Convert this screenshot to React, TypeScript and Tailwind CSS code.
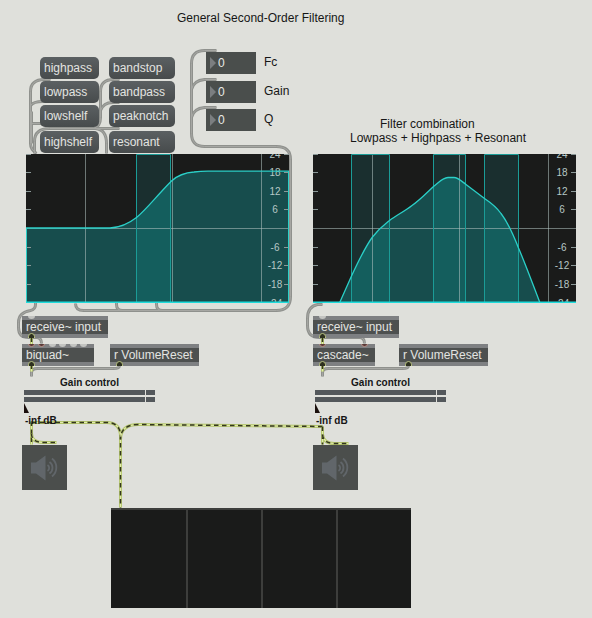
import { useId } from "react";

type Placed = { place: string };

/* ---------- patch cords ---------- */

const controlCords = [
  // message boxes into the first graph
  "M51 80 H45 Q31 80 31 92 V144 Q31 150 37 154",
  "M51 102 H43 Q34 102 31 106",
  "M51 124 H32 M32 112 V144",
  "M120 129 H50 Q35 129 35 142 V154",
  "M90 129 H96 Q107 130 107 144 V154",
  "M120 80 H114 Q101 80 101 92 V118 Q101 127 94 129",
  "M120 103 H113 Q104 103 101 111",
  // number boxes
  "M217 51 H205 Q192 51 192 64 V134 Q192 147 205 147 H277 Q291 147 291 160 V297 Q291 311 277 311 H84 Q76 311 76 304",
  "M217 80 H205 Q194 81 192 90",
  "M217 108 H205 Q194 109 192 118",
  // graph outlets
  "M117 303 V305 Q117 311 123 311",
  "M157 303 V305 Q157 311 163 311",
  "M36 303 V305 Q36 310 31 311 Q19 313 19 323 V328 Q19 338 29 338 H37 Q42 338 42 344",
  "M323 305 H318 Q308 307 308 319 V326 Q308 338 320 338 H360 Q365 338 365 344",
  // volume resets
  "M120 366 Q120 369 114 369 H38 Q32 369 32 373 V377",
  "M409 366 Q409 369 403 369 H329 Q323 369 323 373 V377",
];

const signalCords = [
  "M32 338 V345",
  "M323 338 V345",
  "M32 365 V372",
  "M323 365 V372",
  "M32 422 V445",
  "M32 434 Q32 443 44 443 H57",
  "M32 423 H107 Q121 423 121 437 V508",
  "M323 427 L139 425 Q121 425 121 440",
  "M323 427 V445",
  "M323 435 Q324 444 335 444 H349",
];

function Cords() {
  return (
    <svg className="pointer-events-none absolute inset-0 h-full w-full overflow-visible" fill="none" aria-hidden="true">
      <g transform="translate(-0.5 -0.5)">
        {controlCords.map((d) => (
          <path key={d} d={d} stroke="#8f918d" strokeWidth="3" />
        ))}
        {controlCords.map((d) => (
          <path key={d} d={d} stroke="#a6a7a3" strokeWidth="1" />
        ))}
        {signalCords.map((d) => (
          <path key={d} d={d} stroke="#b3c46c" strokeWidth="3" />
        ))}
        {signalCords.map((d) => (
          <g key={d}>
            <path d={d} stroke="#e2edaa" strokeWidth="1.2" />
            <path d={d} stroke="#34371f" strokeWidth="1.5" strokeDasharray="4.5 3.5" />
          </g>
        ))}
      </g>
    </svg>
  );
}

/* Half-round inlets and ringed outlets drawn over the object boxes. */
function Ports() {
  return (
    <svg className="pointer-events-none absolute inset-0 h-full w-full overflow-visible" fill="none" aria-hidden="true">
      <g transform="translate(-0.5 0)">
        {[[32, 316], [323, 316], [53, 344], [63, 344], [74, 344], [84, 344]].map(([x, y]) => (
          <path key={`${x}-${y}`} d={`M${x - 3.5} ${y} a3.5 3 0 0 0 7 0 z`} fill="#c3c4c1" />
        ))}
        {[[32, 344], [42, 344], [323, 344], [365, 344]].map(([x, y]) => (
          <path key={x} d={`M${x - 3} ${y} a3 2.500 0 0 0 6 0`} fill="#5a3a37" stroke="#b9938a" />
        ))}
        {[[32, 336], [32, 364], [120, 364], [323, 336], [323, 364], [409, 364]].map(([x, y]) => (
          <path key={`${x}-${y}`} d={`M${x - 3} ${y + 2} v-1.500 a3 3 0 0 1 6 0 v1.500`} fill="#2d3020" stroke="#b9c382" />
        ))}
      </g>
    </svg>
  );
}

/* ---------- filter graph ---------- */

const dbMarks = [
  [24, 0], [18, 18], [12, 37], [6, 55], [-6, 93], [-12, 111], [-18, 130], [-24, 149],
];

type GraphProps = Placed & {
  name: string;
  curve: string;
  area: string;
  bands: number[][];
  closed?: boolean;
};

function FilterGraph({ place, name, curve, area, bands, closed }: GraphProps) {
  const clip = useId();
  return (
    <svg className={`absolute h-[149px] w-[263px] ${place}`} viewBox="0 0 263 149" role="img" aria-label={name}>
      <defs>
        <clipPath id={clip}>
          <path d={area} />
        </clipPath>
      </defs>
      <rect width="263" height="149" fill="#1a1b1a" />
      {bands.map(([a, b]) => (
        <rect key={a} x={a} y="0" width={b - a} height="149" fill="#1a2f2f" />
      ))}
      <path d={area} fill="#174d4d" />
      <g clipPath={`url(#${clip})`}>
        {bands.map(([a, b]) => (
          <rect key={a} x={a} y="0" width={b - a} height="149" fill="#145e5d" />
        ))}
      </g>
      <path d="M0 74.5 H263 M59.5 0 V149 M146.5 0 V149 M235.5 0 V149" stroke="#b4c4c2" strokeOpacity="0.55" fill="none" />
      {bands.map(([a, b]) => (
        <path key={a} d={`M${a + 0.5} 149 V0.5 H${b + 0.5} V149`} fill="none" stroke="#1b9c97" />
      ))}
      {dbMarks.map(([db, y]) => (
        <g key={db}>
          <path d={`M0 ${y + 0.5} h5 M258 ${y + 0.5} h5`} stroke="#8b9998" />
          <text
            x="249"
            y={y + 4}
            textAnchor="middle"
            className="fill-[#b6c8c6] text-[10px] [font-family:'Liberation_Sans',Arial,sans-serif]"
          >
            {db}
          </text>
        </g>
      ))}
      <path d={curve} fill="none" stroke="#2bd0c8" strokeWidth="1.3" />
      {closed && <path d="M0.5 74 V148.5 M262.5 17 V148.5" stroke="#2bd0c8" fill="none" />}
      <path d="M0 148.3 H263" stroke="#1fdcdc" strokeWidth="1.6" />
    </svg>
  );
}

const shelfCurve =
  "M0 74 H84 C93 73.5 101 71 110.5 63.5 C120 56 130 42.5 145.5 27 C153 20 160 18.5 168 18 C172 17.5 176 17.2 182 17.2 H263";
const comboCurve =
  "M26.5 149 L38.5 122 C45 108 52 93 59.5 83 C66 74 71 71 76.5 66.5 C84 61 92 57 99 51.5 C107 46 113 39.5 120.5 32.5 C126 28 130 23.5 135 23.5 H141 C145 23.5 149 27.5 153 30.5 L171.5 44.5 C177.5 48.5 183.5 53 188 59.5 C194.5 68 200.5 81 205.5 94 C212 109 219 128 227 149";

/* ---------- boxes ---------- */

function Message({ place, text }: Placed & { text: string }) {
  return (
    <button
      type="button"
      className={`absolute h-[22px] rounded-[5px] bg-linear-to-b from-[#5b6062] to-[#474b4c] px-1 text-left text-xs text-[#e3e4e1] ${place}`}
    >
      {text}
    </button>
  );
}

function NumberBox({ place, label }: Placed & { label: string }) {
  const id = useId();
  return (
    <div className={`absolute flex items-center gap-2 ${place}`}>
      <div className="flex h-[22px] w-[50px] items-center gap-0.5 bg-[#4a4e4c] pl-1">
        <span className="h-0 w-0 border-y-6 border-l-6 border-y-transparent border-l-[#7b7e80]" />
        <input id={id} defaultValue="0" inputMode="numeric" className="w-8 min-w-0 bg-transparent text-xs text-[#e8e9e6] outline-none" />
      </div>
      <label htmlFor={id} className="pb-0.5">{label}</label>
    </div>
  );
}

function ObjectBox({ place, text }: Placed & { text: string }) {
  return (
    <div className={`absolute flex h-[22px] items-center border-y-4 border-[#7e8082] bg-[#4d504f] px-1 text-xs text-[#e3e4e1] ${place}`}>
      {text}
    </div>
  );
}

function GainControl({ place }: Placed) {
  const id = useId();
  return (
    <div className={`absolute flex w-[131px] flex-col text-[10px] leading-[14px] font-bold ${place}`}>
      <label htmlFor={id} className="text-center">Gain control</label>
      <input
        id={id}
        type="range"
        defaultValue={0}
        className="h-[23px] w-full appearance-none bg-[linear-gradient(90deg,transparent_121px,#dfe0db_121px,#dfe0db_122px,transparent_122px),linear-gradient(#53585b_5px,transparent_5px,transparent_7px,#53585b_7px)] bg-[length:100%_12px] bg-no-repeat [&::-webkit-slider-runnable-track]:h-full [&::-webkit-slider-thumb]:mt-[13px] [&::-webkit-slider-thumb]:h-[10px] [&::-webkit-slider-thumb]:w-[5px] [&::-webkit-slider-thumb]:appearance-none [&::-webkit-slider-thumb]:bg-[#1a0f0c] [&::-webkit-slider-thumb]:[clip-path:polygon(0_0,100%_100%,0_100%)]"
      />
      <output htmlFor={id} className="pt-px pl-px">-inf dB</output>
    </div>
  );
}

function AudioToggle({ place }: Placed) {
  return (
    <button type="button" aria-label="Audio output" className={`absolute size-[45px] bg-[#4b4e4c] ${place}`}>
      <svg viewBox="0 0 45 45" fill="none" aria-hidden="true">
        <path d="M9 17.5 H14 L23.500 10.500 V35.500 L14 28.500 H9 Z" fill="#61666a" />
        <path d="M25.500 20 a3.500 3.500 0 0 1 0 6 M27.500 17 a7 7 0 0 1 0 11.500 M30 13.500 a11.500 11.500 0 0 1 0 18" stroke="#61666a" strokeWidth="1.8" />
      </svg>
    </button>
  );
}

export default function App() {
  return (
    <main className="relative min-h-screen w-full overflow-hidden bg-[#dfe0db] text-xs leading-[14px] text-[#161616] [font-family:'Liberation_Sans',Arial,sans-serif]">
      <h1 className="absolute top-[11px] left-[177px]">General Second-Order Filtering</h1>
      <h2 className="absolute top-[117px] left-[350px]">
        <span className="block pl-[30px]">Filter combination</span>
        <span className="block">Lowpass + Highpass + Resonant</span>
      </h2>

      <Cords />

      <Message place="top-[57px] left-[40px] w-[59px]" text="highpass" />
      <Message place="top-[81px] left-[40px] w-[59px]" text="lowpass" />
      <Message place="top-[105px] left-[40px] w-[59px]" text="lowshelf" />
      <Message place="top-[131px] left-[40px] w-[59px]" text="highshelf" />
      <Message place="top-[57px] left-[109px] w-[66px]" text="bandstop" />
      <Message place="top-[81px] left-[109px] w-[66px]" text="bandpass" />
      <Message place="top-[105px] left-[109px] w-[66px]" text="peaknotch" />
      <Message place="top-[131px] left-[109px] w-[66px]" text="resonant" />

      <NumberBox place="top-[52px] left-[206px]" label="Fc" />
      <NumberBox place="top-[81px] left-[206px]" label="Gain" />
      <NumberBox place="top-[109px] left-[206px]" label="Q" />

      <FilterGraph
        place="top-[154px] left-[26px]"
        name="Second-order filter response"
        curve={shelfCurve}
        area={`${shelfCurve} V149 H0 Z`}
        bands={[[110, 144]]}
        closed
      />
      <FilterGraph
        place="top-[154px] left-[313px]"
        name="Combined filter response"
        curve={comboCurve}
        area={`${comboCurve} Z`}
        bands={[[38, 76], [120, 152], [171, 205]]}
      />

      <ObjectBox place="top-[316px] left-[22px] w-[86px]" text="receive~ input" />
      <ObjectBox place="top-[344px] left-[22px] w-[72px]" text="biquad~" />
      <ObjectBox place="top-[344px] left-[110px] w-[89px]" text="r VolumeReset" />
      <ObjectBox place="top-[316px] left-[313px] w-[86px]" text="receive~ input" />
      <ObjectBox place="top-[344px] left-[313px] w-[62px]" text="cascade~" />
      <ObjectBox place="top-[344px] left-[399px] w-[89px]" text="r VolumeReset" />
      <Ports />

      <GainControl place="top-[376px] left-[24px]" />
      <GainControl place="top-[376px] left-[315px]" />
      <AudioToggle place="top-[445px] left-[22px]" />
      <AudioToggle place="top-[445px] left-[313px]" />

      <div className="absolute top-[508px] left-[111px] grid h-[100px] w-[300px] grid-cols-4 border-t-2 border-[#3d3e3c] bg-[#1a1b1a]">
        <div />
        <div className="border-l-2 border-[#3d3e3c]" />
        <div className="border-l-2 border-[#3d3e3c]" />
        <div className="border-l-2 border-[#3d3e3c]" />
      </div>
    </main>
  );
}
